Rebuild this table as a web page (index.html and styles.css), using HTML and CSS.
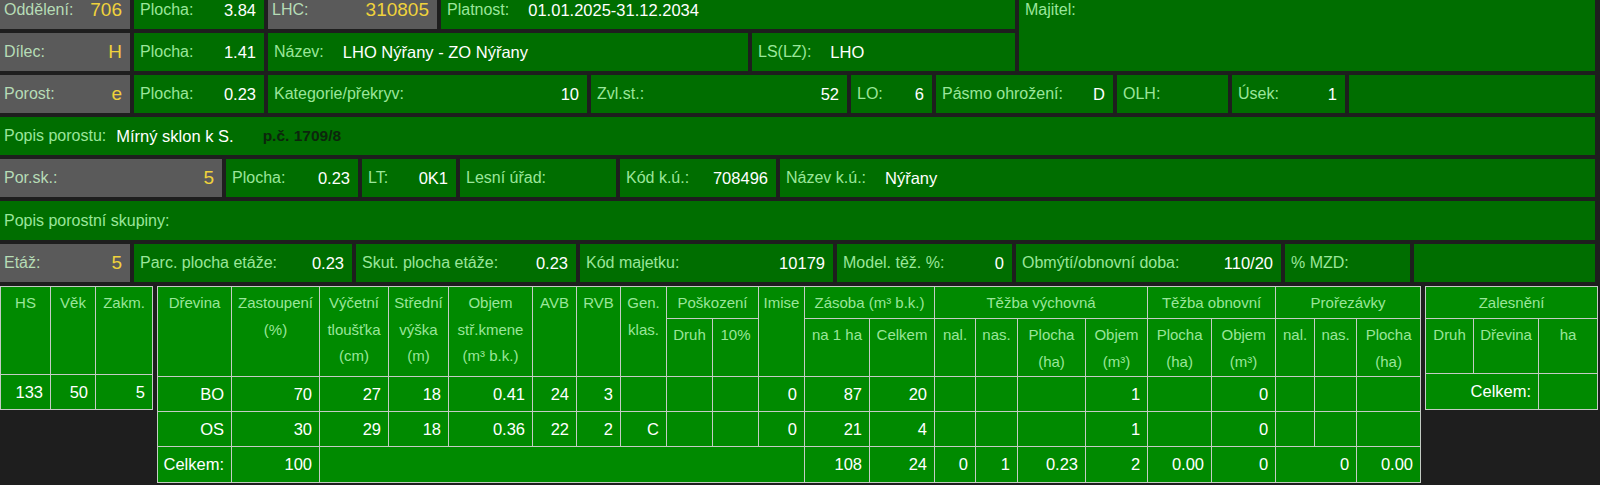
FILE: index.html
```html
<!DOCTYPE html>
<html lang="cs">
<head>
<meta charset="utf-8">
<title>Porost</title>
<link rel="stylesheet" href="styles.css">
</head>
<body>
<div class="sheet">
  <div class="top">
    <div class="top-left">
      <div class="row">
        <div class="cell gray w130 split"><span class="lbl">Oddělení:</span><span class="big">706</span></div>
        <div class="cell w130 split"><span class="lbl">Plocha:</span><span class="val">3.84</span></div>
        <div class="cell gray w169 split"><span class="lbl">LHC:</span><span class="big">310805</span></div>
        <div class="cell grow"><span class="lbl">Platnost:</span><span class="val after">01.01.2025-31.12.2034</span></div>
      </div>
      <div class="row">
        <div class="cell gray w130 split"><span class="lbl">Dílec:</span><span class="big">H</span></div>
        <div class="cell w130 split"><span class="lbl">Plocha:</span><span class="val">1.41</span></div>
        <div class="cell w480"><span class="lbl">Název:</span><span class="val after">LHO Nýřany - ZO Nýřany</span></div>
        <div class="cell grow"><span class="lbl">LS(LZ):</span><span class="val after">LHO</span></div>
      </div>
    </div>
    <div class="cell owner"><span class="lbl">Majitel:</span></div>
  </div>

  <div class="row">
    <div class="cell gray w130 split"><span class="lbl">Porost:</span><span class="big">e</span></div>
    <div class="cell w130 split"><span class="lbl">Plocha:</span><span class="val">0.23</span></div>
    <div class="cell w319 split"><span class="lbl">Kategorie/překryv:</span><span class="val">10</span></div>
    <div class="cell w256 split"><span class="lbl">Zvl.st.:</span><span class="val">52</span></div>
    <div class="cell w81 split"><span class="lbl">LO:</span><span class="val">6</span></div>
    <div class="cell w177 split"><span class="lbl">Pásmo ohrožení:</span><span class="val">D</span></div>
    <div class="cell w111"><span class="lbl">OLH:</span></div>
    <div class="cell w113 split"><span class="lbl">Úsek:</span><span class="val">1</span></div>
    <div class="cell grow"></div>
  </div>

  <div class="cell line"><span class="lbl">Popis porostu:</span><span class="val desc">Mírný sklon k S.</span><span class="parcel">p.č. 1709/8</span></div>

  <div class="row">
    <div class="cell gray w222 split"><span class="lbl">Por.sk.:</span><span class="big">5</span></div>
    <div class="cell w132 split"><span class="lbl">Plocha:</span><span class="val">0.23</span></div>
    <div class="cell w94 split"><span class="lbl">LT:</span><span class="val">0K1</span></div>
    <div class="cell w156"><span class="lbl">Lesní úřad:</span></div>
    <div class="cell w156 split"><span class="lbl">Kód k.ú.:</span><span class="val">708496</span></div>
    <div class="cell grow"><span class="lbl">Název k.ú.:</span><span class="val after">Nýřany</span></div>
  </div>

  <div class="cell line line-tall"><span class="lbl">Popis porostní skupiny:</span></div>

  <div class="row">
    <div class="cell gray w130 split"><span class="lbl">Etáž:</span><span class="big">5</span></div>
    <div class="cell w218 split"><span class="lbl">Parc. plocha etáže:</span><span class="val">0.23</span></div>
    <div class="cell w220 split"><span class="lbl">Skut. plocha etáže:</span><span class="val">0.23</span></div>
    <div class="cell w253 split"><span class="lbl">Kód majetku:</span><span class="val">10179</span></div>
    <div class="cell w175 split"><span class="lbl">Model. těž. %:</span><span class="val">0</span></div>
    <div class="cell w265 split"><span class="lbl">Obmýtí/obnovní doba:</span><span class="val">110/20</span></div>
    <div class="cell w125"><span class="lbl">% MZD:</span></div>
    <div class="cell grow"></div>
  </div>

  <div class="tables">
    <table class="grid t-stand">
      <colgroup><col class="c50"><col class="c45"><col class="c57"></colgroup>
      <tr class="h88"><th>HS</th><th>Věk</th><th>Zakm.</th></tr>
      <tr class="h35"><td>133</td><td>50</td><td>5</td></tr>
    </table>

    <table class="grid t-main">
      <colgroup>
        <col class="c74"><col class="c88"><col class="c69"><col class="c60"><col class="c84">
        <col class="c44"><col class="c44"><col class="c46"><col class="c46"><col class="c46"><col class="c46">
        <col class="c65"><col class="c65"><col class="c41"><col class="c42"><col class="c68"><col class="c62">
        <col class="c64"><col class="c64"><col class="c39"><col class="c42"><col class="c64">
      </colgroup>
      <tr class="h32">
        <th rowspan="2">Dřevina</th>
        <th rowspan="2">Zastoupení<br>(%)</th>
        <th rowspan="2">Výčetní<br>tloušťka<br>(cm)</th>
        <th rowspan="2">Střední<br>výška<br>(m)</th>
        <th rowspan="2">Objem<br>stř.kmene<br>(m³ b.k.)</th>
        <th rowspan="2">AVB</th>
        <th rowspan="2">RVB</th>
        <th rowspan="2">Gen.<br>klas.</th>
        <th colspan="2">Poškození</th>
        <th rowspan="2">Imise</th>
        <th colspan="2">Zásoba (m³ b.k.)</th>
        <th colspan="4">Těžba výchovná</th>
        <th colspan="2">Těžba obnovní</th>
        <th colspan="3">Prořezávky</th>
      </tr>
      <tr class="h58">
        <th>Druh</th><th>10%</th>
        <th>na 1 ha</th><th>Celkem</th>
        <th>nal.</th><th>nas.</th><th>Plocha<br>(ha)</th><th>Objem<br>(m³)</th>
        <th>Plocha<br>(ha)</th><th>Objem<br>(m³)</th>
        <th>nal.</th><th>nas.</th><th>Plocha<br>(ha)</th>
      </tr>
      <tr class="h35">
        <td>BO</td><td>70</td><td>27</td><td>18</td><td>0.41</td><td>24</td><td>3</td><td></td><td></td><td></td><td>0</td>
        <td>87</td><td>20</td><td></td><td></td><td></td><td>1</td><td></td><td>0</td><td></td><td></td><td></td>
      </tr>
      <tr class="h35">
        <td>OS</td><td>30</td><td>29</td><td>18</td><td>0.36</td><td>22</td><td>2</td><td>C</td><td></td><td></td><td>0</td>
        <td>21</td><td>4</td><td></td><td></td><td></td><td>1</td><td></td><td>0</td><td></td><td></td><td></td>
      </tr>
      <tr class="h36">
        <td>Celkem:</td><td>100</td><td colspan="9"></td>
        <td>108</td><td>24</td><td>0</td><td>1</td><td>0.23</td><td>2</td><td>0.00</td><td>0</td><td colspan="2">0</td><td>0.00</td>
      </tr>
    </table>

    <table class="grid t-plant">
      <colgroup><col class="c48"><col class="c65"><col class="c59"></colgroup>
      <tr class="h32"><th colspan="3">Zalesnění</th></tr>
      <tr class="h55"><th>Druh</th><th>Dřevina</th><th>ha</th></tr>
      <tr class="h36"><td colspan="2">Celkem:</td><td></td></tr>
    </table>
  </div>
</div>
</body>
</html>
```

FILE: styles.css
```css
html, body {
  margin: 0;
  padding: 0;
  background: #1e1e1e;
}

body {
  font-family: "Liberation Sans", Arial, sans-serif;
  font-size: 16px;
  color: #ffffff;
  overflow: hidden;
}

.sheet {
  width: 1595px;
  margin-top: -9px;
  display: flex;
  flex-direction: column;
  gap: 4px;
}

.top {
  display: flex;
  gap: 4px;
}

.top-left {
  width: 1015px;
  display: flex;
  flex-direction: column;
  gap: 4px;
}

.row {
  display: flex;
  gap: 4px;
  height: 38px;
}

.cell {
  box-sizing: border-box;
  background: #006e00;
  display: flex;
  align-items: center;
  padding: 0 8px 0 6px;
  white-space: nowrap;
  flex: none;
}

.cell.gray {
  background: #5a5a5a;
  padding-left: 4px;
}

.split {
  justify-content: space-between;
}

.grow {
  flex: 1 1 auto;
}

.lbl {
  color: #9ae69a;
  font-size: 16px;
}

.gray .lbl {
  color: #b6dcb6;
}

.val {
  color: #ffffff;
  font-size: 16.5px;
}

.val.after {
  margin-left: 19px;
}

.big {
  color: #f0d23c;
  font-size: 19px;
}

.owner {
  flex: 1 1 auto;
  align-items: flex-start;
  line-height: 38px;
}

.line {
  height: 38px;
  padding-left: 4px;
}

.line-tall {
  height: 39px;
}

.desc {
  margin-left: 10px;
}

.parcel {
  margin-left: 29px;
  color: #0c260c;
  font-weight: bold;
  font-size: 15.5px;
}

.w81 { width: 81px; }
.w94 { width: 94px; }
.w111 { width: 111px; }
.w113 { width: 113px; }
.w125 { width: 125px; }
.w130 { width: 130px; }
.w132 { width: 132px; }
.w156 { width: 156px; }
.w169 { width: 169px; }
.w175 { width: 175px; }
.w177 { width: 177px; }
.w218 { width: 218px; }
.w220 { width: 220px; }
.w222 { width: 222px; }
.w253 { width: 253px; }
.w256 { width: 256px; }
.w265 { width: 265px; }
.w319 { width: 319px; }
.w480 { width: 480px; }

/* tables */
.tables {
  display: flex;
  align-items: flex-start;
  gap: 4px;
}

.grid {
  border-collapse: collapse;
  table-layout: fixed;
  background: #008a00;
  font-size: 16.5px;
  color: #ffffff;
}

.t-stand { width: 152px; }
.t-main { width: 1263px; }
.t-plant { width: 172px; }

.grid th,
.grid td {
  border: 1px solid #c4ccc4;
  padding: 0;
  white-space: nowrap;
  overflow: hidden;
}

.grid th {
  color: #9ae69a;
  font-weight: normal;
  font-size: 15px;
  line-height: 26.5px;
  vertical-align: top;
  text-align: center;
  padding-top: 3px;
}

.grid td {
  text-align: right;
  vertical-align: middle;
  padding-right: 7px;
}

.h32 { height: 32px; }
.h35 { height: 35px; }
.h36 { height: 36px; }
.h55 { height: 55px; }
.h58 { height: 58px; }
.h88 { height: 88px; }

.c39 { width: 39px; }
.c41 { width: 41px; }
.c42 { width: 42px; }
.c44 { width: 44px; }
.c45 { width: 45px; }
.c46 { width: 46px; }
.c48 { width: 48px; }
.c50 { width: 50px; }
.c57 { width: 57px; }
.c59 { width: 59px; }
.c60 { width: 60px; }
.c62 { width: 62px; }
.c64 { width: 64px; }
.c65 { width: 65px; }
.c68 { width: 68px; }
.c69 { width: 69px; }
.c74 { width: 74px; }
.c84 { width: 84px; }
.c88 { width: 88px; }
```
